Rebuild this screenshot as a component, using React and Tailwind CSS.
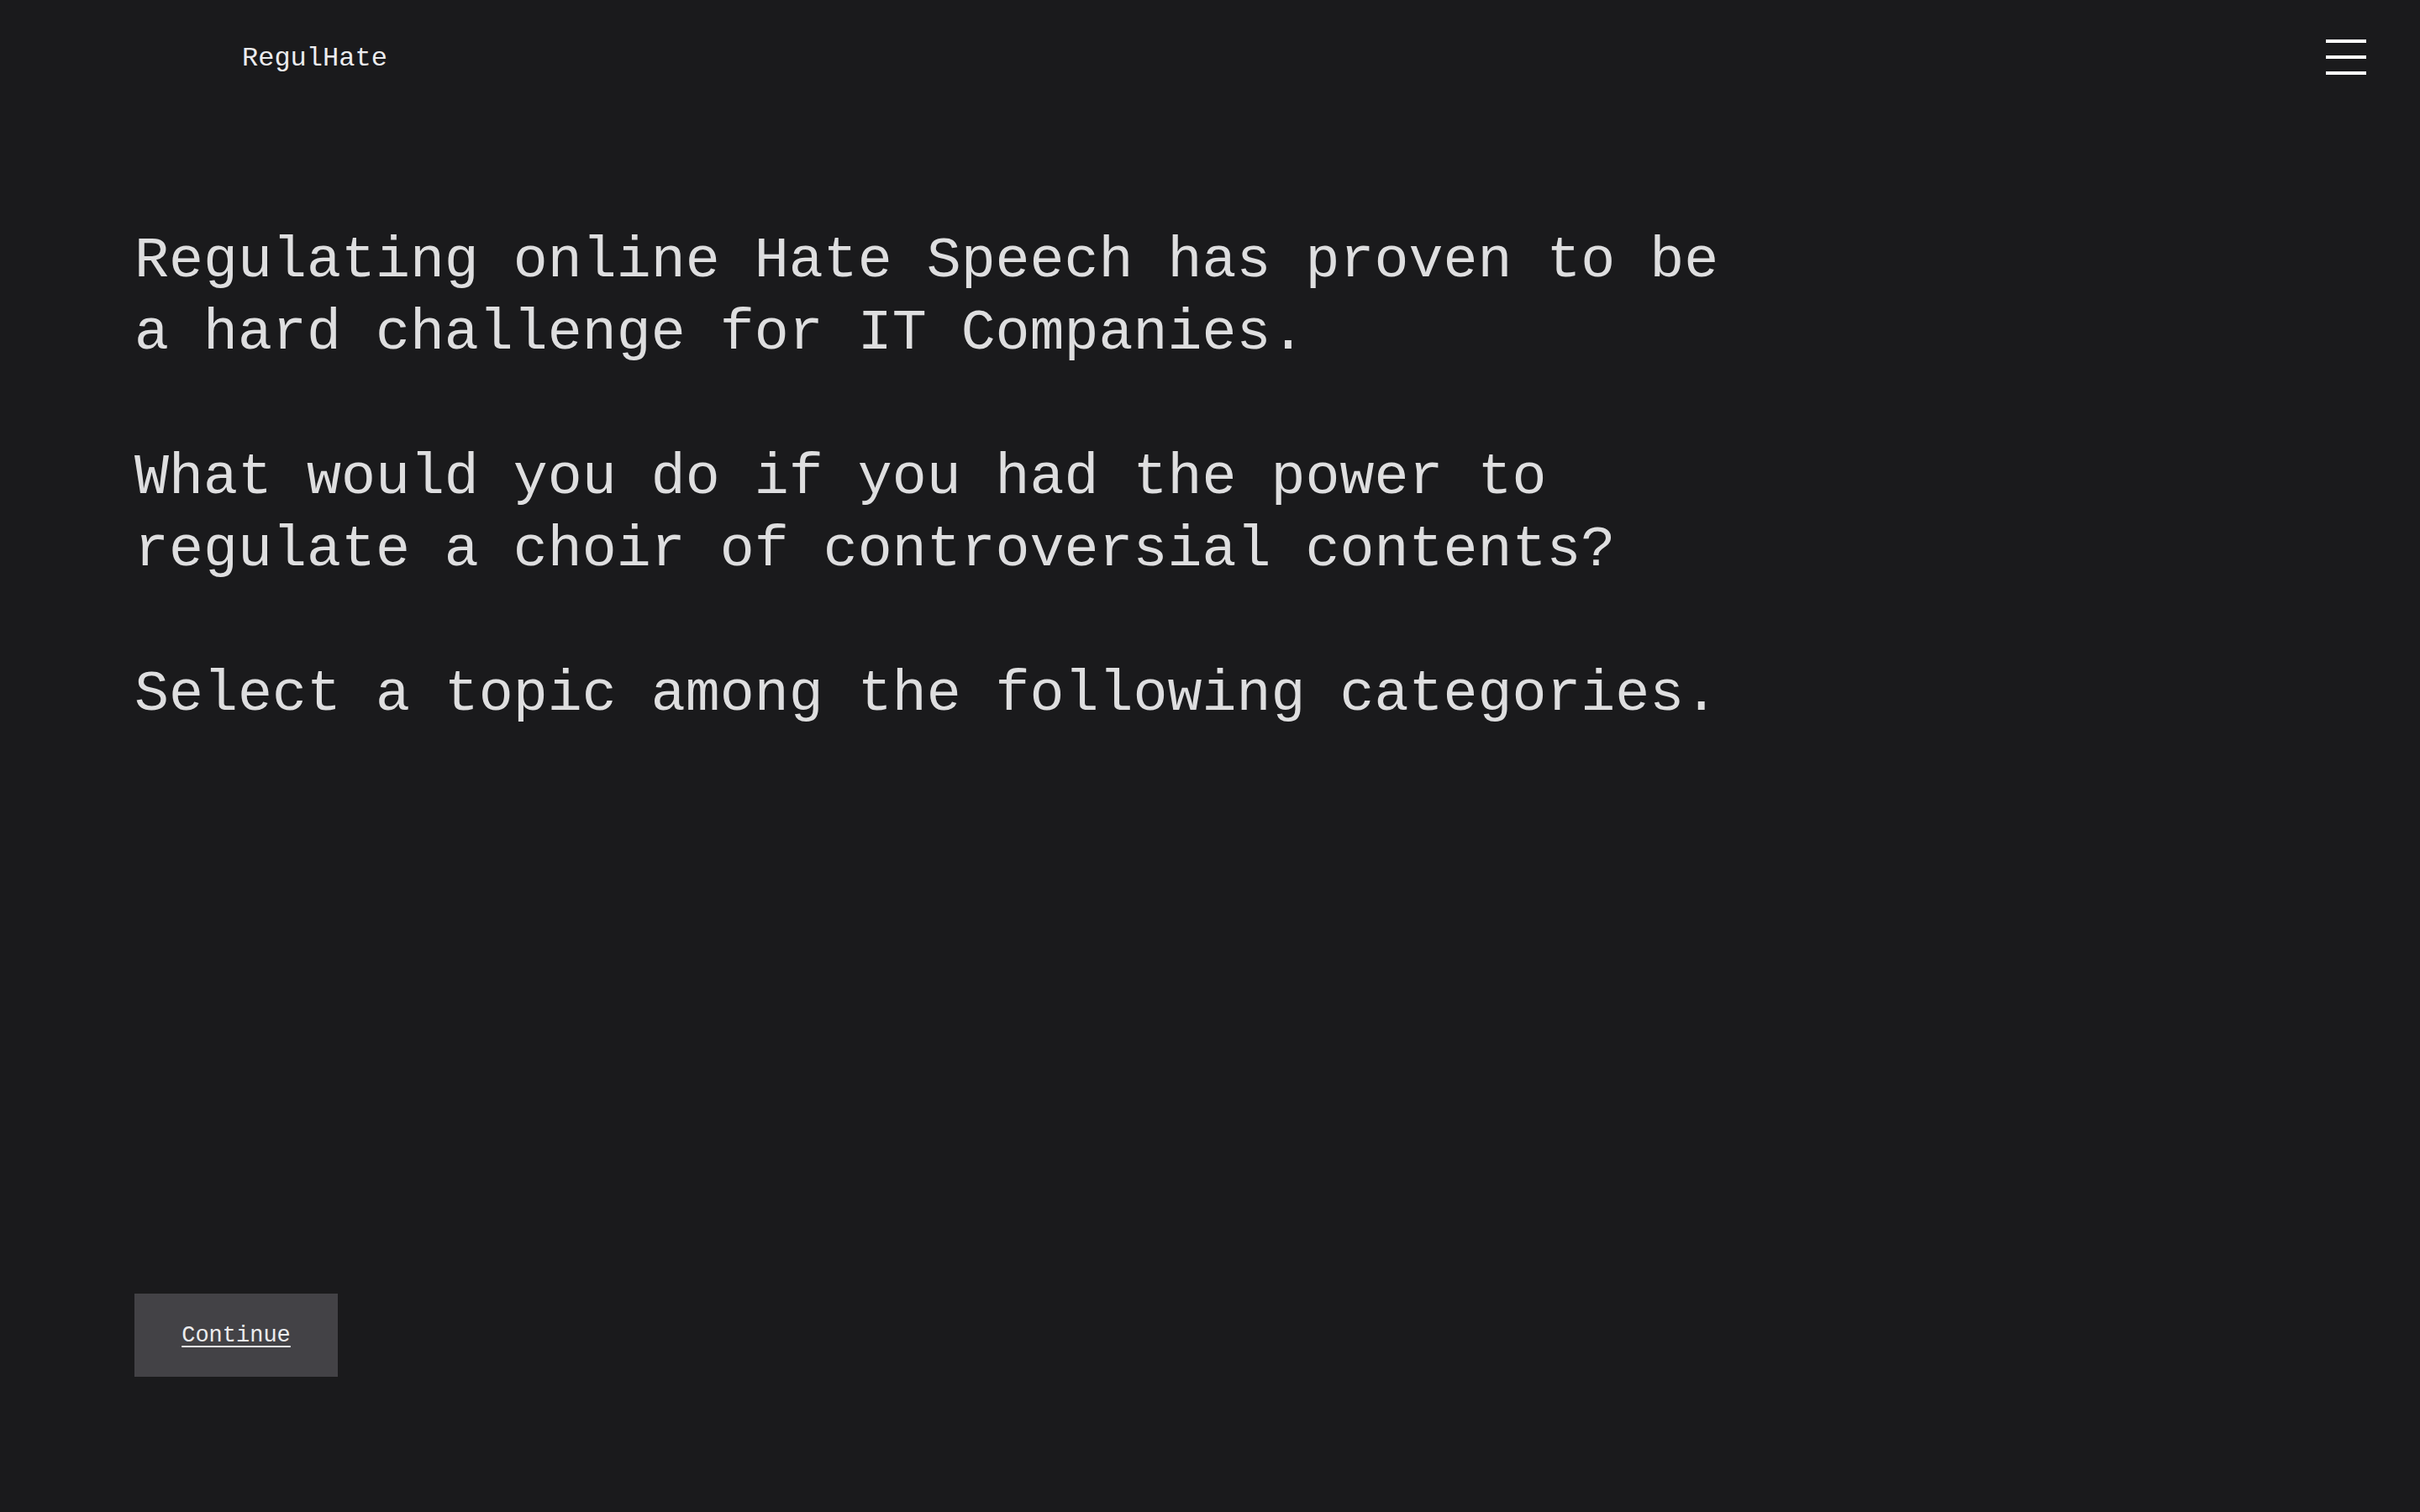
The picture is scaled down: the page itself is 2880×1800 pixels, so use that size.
import React from 'react';

const mono = "font-['Liberation_Mono','DejaVu_Sans_Mono',monospace]";

function MenuIcon() {
  return (
    <button className="w-12 h-[42px] flex flex-col justify-between" aria-label="menu">
      <span className="block h-1 w-12 bg-white" />
      <span className="block h-1 w-12 bg-white" />
      <span className="block h-1 w-12 bg-white" />
    </button>
  );
}

export default function App() {
  return (
    <div className={`min-h-screen bg-[#1a1a1c] text-[#dededf] flex flex-col ${mono}`}>
      <header className="h-[136px] flex items-center justify-between pl-[288px] pr-[64px]">
        <span className="text-[32px] leading-none text-[#ececee] pt-[4px]">RegulHate</span>
        <MenuIcon />
      </header>

      <main className="flex-1 flex flex-col px-[160px] pb-[161px]">
        <div className="mt-[132px] text-[68.3px] leading-[86px] font-light flex flex-col gap-[86px]">
          <p>
            Regulating online Hate Speech has proven to be
            <br />
            a hard challenge for IT Companies.
          </p>
          <p>
            What would you do if you had the power to
            <br />
            regulate a choir of controversial contents?
          </p>
          <p>Select a topic among the following categories.</p>
        </div>

        <div className="mt-auto">
          <button className="w-[242px] h-[99px] pt-[2px] bg-[#434246] text-[27px] text-[#ececee] underline underline-offset-[5px] decoration-2">
            Continue
          </button>
        </div>
      </main>
    </div>
  );
}
